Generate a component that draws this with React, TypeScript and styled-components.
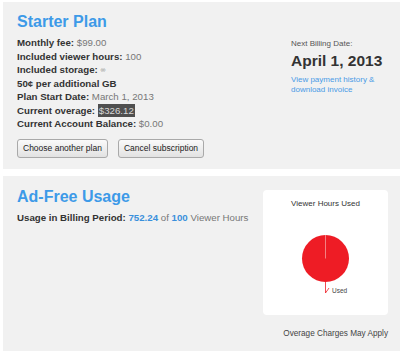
import React from "react";
import styled, { createGlobalStyle } from "styled-components";

const Global = createGlobalStyle`
  html, body { margin: 0; padding: 0; background: #ffffff; }
  body { font-family: "Liberation Sans", Arial, sans-serif; }
  * { box-sizing: border-box; }
`;

const Page = styled.div`
  width: 400px;
  height: 351px;
  overflow: hidden;
  padding: 2px 0 0 3px;
  display: flex;
  flex-direction: column;
  gap: 7px;
`;

const Panel = styled.section<{ $grow?: boolean }>`
  background: #f1f1f1;
  display: flex;
  justify-content: space-between;
  padding: ${(p) => (p.$grow ? "11px 12px 0 14px" : "10px 12px 11px 14px")};
  flex: ${(p) => (p.$grow ? "1" : "none")};
  height: ${(p) => (p.$grow ? "auto" : "167px")};
`;

const Column = styled.div`
  display: flex;
  flex-direction: column;
`;

const Title = styled.h2`
  margin: 0;
  font-size: 16px;
  line-height: 20px;
  font-weight: bold;
  color: #3d9ae8;
`;

const Details = styled.div`
  margin-top: 4px;
  display: flex;
  flex-direction: column;
`;

const Line = styled.div`
  font-size: 9.7px;
  line-height: 13.5px;
  color: #333;
  white-space: nowrap;
`;

const Label = styled.b`
  font-weight: bold;
  color: #333;
`;

const Value = styled.span<{ $blue?: boolean; $bold?: boolean }>`
  color: ${(p) => (p.$blue ? "#3a90dc" : "#777")};
  font-weight: ${(p) => (p.$bold ? "bold" : "normal")};
`;

const Infinity = styled.span`
  color: #888;
  font-size: 7px;
  vertical-align: 1px;
`;

const Selected = styled.span`
  background: #4f4f4f;
  color: #d8d8d8;
  padding: 1px 1px;
`;

const Buttons = styled.div`
  margin-top: 8px;
  display: flex;
  gap: 10px;
`;

const Button = styled.button`
  height: 19px;
  padding: 0 5px;
  border: 1px solid #a9a9a9;
  border-radius: 3px;
  background: linear-gradient(#fafafa, #e2e2e2);
  font-family: "Liberation Sans", Arial, sans-serif;
  font-size: 8.5px;
  color: #222;
  cursor: pointer;
`;

const BillingCol = styled.div`
  width: 97px;
  margin-top: 27px;
  display: flex;
  flex-direction: column;
`;

const SmallLabel = styled.div`
  font-size: 8px;
  line-height: 10px;
  color: #555;
`;

const BigDate = styled.div`
  margin-top: 3px;
  font-size: 15.5px;
  line-height: 18px;
  font-weight: bold;
  color: #333;
  white-space: nowrap;
`;

const Link = styled.a`
  margin-top: 5px;
  font-size: 8px;
  line-height: 10px;
  color: #4a9be6;
  text-decoration: none;
`;

const ChartCol = styled.div`
  width: 125px;
  display: flex;
  flex-direction: column;
  align-items: flex-end;
  padding-top: 3px;
`;

const Card = styled.div`
  width: 125px;
  height: 125px;
  background: #ffffff;
  border-radius: 4px;
  display: flex;
  flex-direction: column;
  align-items: center;
  padding-top: 9px;
`;

const CardTitle = styled.div`
  font-size: 8px;
  line-height: 10px;
  color: #333;
`;

const Note = styled.div`
  margin-top: 14px;
  font-size: 8.2px;
  line-height: 10px;
  color: #444;
  white-space: nowrap;
`;

const PieSvg = styled.svg`
  margin-top: 25px;
  display: block;
`;

function Pie() {
  return (
    <PieSvg width="80" height="70" viewBox="0 0 80 70">
      <circle cx="39.5" cy="24.5" r="23.5" fill="#ee1c25" />
      <line x1="39.5" y1="24.5" x2="39.5" y2="1" stroke="#f49a9a" strokeWidth="0.8" />
      <polyline points="39.5,48 39.5,59 43,54" fill="none" stroke="#ee1c25" strokeWidth="0.8" />
      <text x="46" y="58.5" fontSize="6.5" fill="#444" fontFamily="Liberation Sans, Arial, sans-serif">
        Used
      </text>
    </PieSvg>
  );
}

export default function App() {
  return (
    <>
      <Global />
      <Page>
        <Panel>
          <Column>
            <Title>Starter Plan</Title>
            <Details>
              <Line>
                <Label>Monthly fee:</Label> <Value>$99.00</Value>
              </Line>
              <Line>
                <Label>Included viewer hours:</Label> <Value>100</Value>
              </Line>
              <Line>
                <Label>Included storage:</Label> <Infinity>∞</Infinity>
              </Line>
              <Line>
                <Label>50¢ per additional GB</Label>
              </Line>
              <Line>
                <Label>Plan Start Date:</Label> <Value>March 1, 2013</Value>
              </Line>
              <Line>
                <Label>Current overage:</Label> <Selected>$326.12</Selected>
              </Line>
              <Line>
                <Label>Current Account Balance:</Label> <Value>$0.00</Value>
              </Line>
            </Details>
            <Buttons>
              <Button>Choose another plan</Button>
              <Button>Cancel subscription</Button>
            </Buttons>
          </Column>
          <BillingCol>
            <SmallLabel>Next Billing Date:</SmallLabel>
            <BigDate>April 1, 2013</BigDate>
            <Link href="#">
              View payment history &amp;
              <br />
              download invoice
            </Link>
          </BillingCol>
        </Panel>
        <Panel $grow>
          <Column>
            <Title>Ad-Free Usage</Title>
            <Details>
              <Line>
                <Label>Usage in Billing Period:</Label> <Value $blue $bold>752.24</Value>{" "}
                <Value>of</Value> <Value $blue $bold>100</Value> <Value>Viewer Hours</Value>
              </Line>
            </Details>
          </Column>
          <ChartCol>
            <Card>
              <CardTitle>Viewer Hours Used</CardTitle>
              <Pie />
            </Card>
            <Note>Overage Charges May Apply</Note>
          </ChartCol>
        </Panel>
      </Page>
    </>
  );
}
